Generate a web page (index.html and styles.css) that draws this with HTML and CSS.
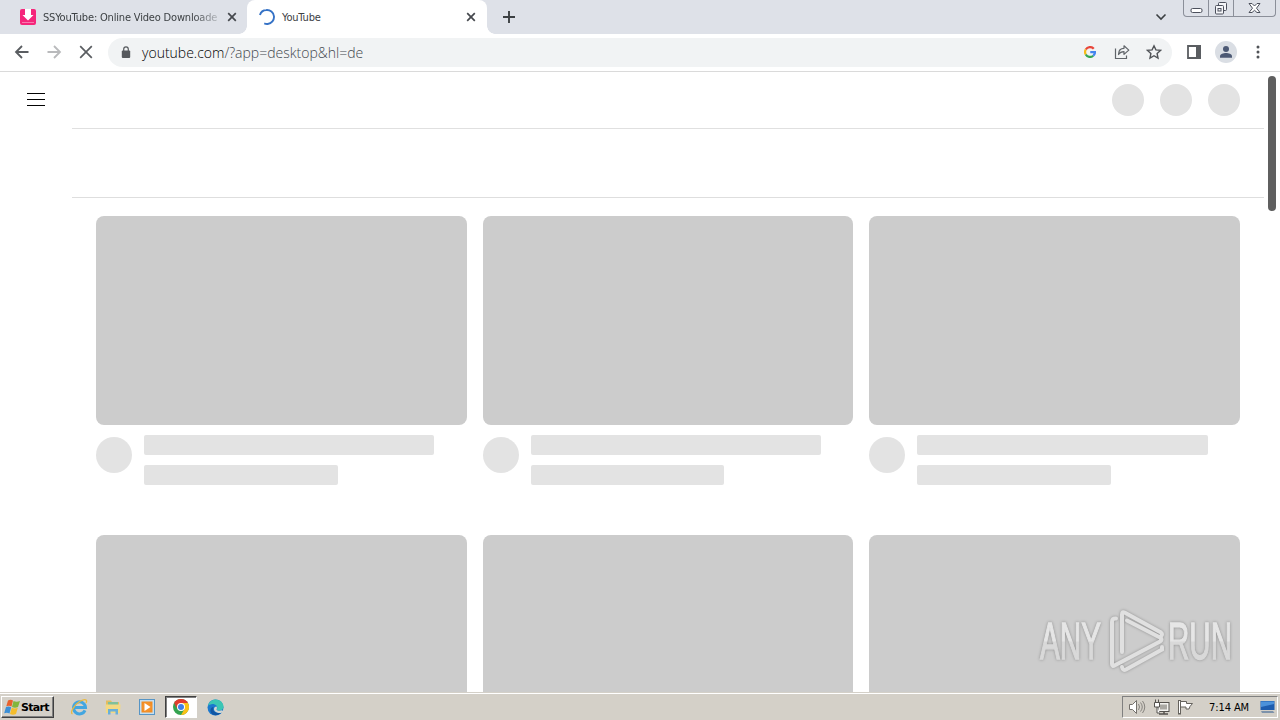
FILE: index.html
```html
<!DOCTYPE html>
<html lang="de">
<head>
    <meta charset="UTF-8">
    <meta name="viewport" content="width=device-width, initial-scale=1.0">
    <title>YouTube</title>
    <link rel="stylesheet" href="styles.css">
</head>
<body>

    <div class="tab-strip">
        <div class="tab">
            <svg class="favicon" width="16" height="16" viewBox="0 0 16 16">
                <rect width="16" height="16" rx="2" fill="#f5267b"/>
                <path d="M5 0h6v6h2.500L8 11.500 2.500 6H5z" fill="#fff"/>
                <path d="M2 13.500h12" fill="none" stroke="#f979ae" stroke-width="1"/>
            </svg>
            <span class="tab-title faded">SSYouTube: Online Video Downloade</span>
            <svg class="tab-close" width="10" height="10" viewBox="0 0 10 10"><path d="M1.2 1.2l7.6 7.6M8.8 1.2L1.2 8.8" stroke="#45484d" stroke-width="1.700"/></svg>
        </div>
        <div class="tab active">
            <svg class="favicon" width="16" height="16" viewBox="0 0 16 16">
                <path d="M1.2 5.2A7 7 0 0 1 8 1a7 7 0 0 1 0 14 7 7 0 0 1-3.4-.9" transform="rotate(-6 8 8)" fill="none" stroke="#3572c6" stroke-width="1.9"/>
            </svg>
            <span class="tab-title">YouTube</span>
            <svg class="tab-close" width="10" height="10" viewBox="0 0 10 10"><path d="M1.2 1.2l7.6 7.6M8.8 1.2L1.2 8.8" stroke="#45484d" stroke-width="1.700"/></svg>
        </div>
        <svg class="new-tab" width="12" height="12" viewBox="0 0 12 12"><path d="M6 0v12M0 6h12" stroke="#3c4043" stroke-width="1.9"/></svg>
        <svg class="tab-search" width="12" height="8" viewBox="0 0 12 8"><path d="M1.5 1.5L6 6l4.5-4.5" fill="none" stroke="#3c4043" stroke-width="1.6"/></svg>
        <div class="window-buttons">
            <span><svg width="13" height="15" viewBox="0 0 13 15"><rect x="1" y="8.5" width="11" height="4" rx="1.5" fill="#fff" stroke="#4c505c"/></svg></span>
            <span><svg width="14" height="15" viewBox="0 0 14 15"><g fill="#f4f5f8" stroke="#4c505c"><rect x="4.500" y="2.500" width="8" height="8" rx="1"/><rect x="1.500" y="5.500" width="8" height="8.500" rx="1"/><rect x="4" y="8.500" width="3" height="2.500"/></g></svg></span>
            <span><svg width="13" height="15" viewBox="0 0 13 15"><path d="M1 3.500h3l2.500 2.500L9 3.500h3L8.500 8.200 12 12.500H9L6.500 10.300 4 12.500H1l3.500-4.300z" fill="#fff" stroke="#4c505c"/></svg></span>
        </div>
    </div>

    <div class="toolbar">
        <div class="nav-icons">
            <svg width="16" height="16" viewBox="0 0 16 16"><path d="M14.500 8H2M8 2L2 8l6 6" fill="none" stroke="#5a5d61" stroke-width="1.800"/></svg>
            <svg width="16" height="16" viewBox="0 0 16 16"><path d="M1.500 8H14M8 2l6 6-6 6" fill="none" stroke="#b9babc" stroke-width="1.800"/></svg>
            <svg width="16" height="16" viewBox="0 0 16 16"><path d="M2.200 2.200l11.600 11.600M13.800 2.200L2.200 13.800" stroke="#5a5d61" stroke-width="1.700"/></svg>
        </div>
        <div class="address-bar">
            <svg class="lock" width="10" height="13" viewBox="0 0 10 13"><rect x=".8" y="4.500" width="8.400" height="7.500" rx="1" fill="#56595d"/><path d="M2.700 5V3.200a2.300 2.300 0 0 1 4.600 0V5" fill="none" stroke="#56595d" stroke-width="1.200"/></svg>
            <span class="url"><span class="host">youtube.com</span>/?app=desktop&amp;hl=de</span>
            <div class="address-icons">
                <svg width="12" height="12" viewBox="0 0 24 24" fill="none" stroke-width="4.500">
                    <path d="M19.500 5.500A10 10 0 0 0 3.500 7" stroke="#e8463a"/>
                    <path d="M3.500 7a10 10 0 0 0 0 10" stroke="#f7bb16"/>
                    <path d="M3.500 17A10 10 0 0 0 18.500 19.500" stroke="#35a553"/>
                    <path d="M18.500 19.500A10 10 0 0 0 22 12H12.500" stroke="#4384ee"/>
                </svg>
                <svg width="16" height="16" viewBox="0 0 16 16" fill="none" stroke="#606469" stroke-width="1.200"><path d="M1.500 4.500v10h11V11.500"/><path d="M4.500 10.500c0-4.300 2.200-6.200 5.500-6.200V1.800l4.800 4.300-4.800 4.300V7.700c-2.700 0-4.300.8-5.500 2.800z" stroke-linejoin="round"/></svg>
                <svg width="16" height="16" viewBox="0 0 16 16"><path d="M8 1.800l1.900 4.100 4.600.5-3.400 3.100.9 4.500L8 11.700 4 14l.9-4.500L1.500 6.400l4.600-.5z" fill="none" stroke="#505357" stroke-width="1.400"/></svg>
            </div>
        </div>
        <svg class="side-panel" width="14" height="14" viewBox="0 0 14 14"><path d="M1 1h12v12H1z" fill="none" stroke="#5a5d61" stroke-width="1.800"/><path d="M9 0h5v14H9z" fill="#5a5d61"/></svg>
        <svg class="profile" width="22" height="22" viewBox="0 0 22 22"><circle cx="11" cy="11" r="11" fill="#dadee4"/><circle cx="11" cy="8" r="3" fill="#4c5974"/><path d="M5 16.800v-1.600c0-2.200 3.500-3.200 6-3.200s6 1 6 3.200v1.600z" fill="#4c5974"/></svg>
        <svg class="menu-dots" width="4" height="14" viewBox="0 0 4 14" fill="#505357"><circle cx="2" cy="2" r="1.500"/><circle cx="2" cy="7" r="1.500"/><circle cx="2" cy="12" r="1.500"/></svg>
    </div>

    <div class="page">
        <div class="sidebar">
            <svg width="18" height="13" viewBox="0 0 18 13"><path d="M0 .5h18M0 6.500h18M0 12.500h18" stroke="#030303"/></svg>
        </div>
        <div class="content">
            <div class="masthead">
                <span class="circle"></span>
                <span class="circle"></span>
                <span class="circle"></span>
            </div>
            <div class="chips"></div>
            <div class="video-grid" id="videoGrid"></div>
        </div>
        <div class="scrollbar"><div class="thumb"></div></div>

        <svg class="watermark" width="220" height="80" viewBox="0 0 220 80">
            <defs>
                <linearGradient id="fade" gradientUnits="userSpaceOnUse" x1="0" y1="16" x2="0" y2="54">
                    <stop offset="0.520" stop-color="#e6e6e6"/>
                    <stop offset="0.560" stop-color="#d9d9d9"/>
                </linearGradient>
            </defs>
            <text x="5" y="54" textLength="61" lengthAdjust="spacingAndGlyphs">ANY</text>
            <text x="133" y="54" textLength="64" lengthAdjust="spacingAndGlyphs">RUN</text>
            <g class="mark">
                <path d="M87 47V9.500Q87 6 90 7.700L126 27.500Q128 29 126 31"/>
                <path d="M81 13.500Q77 13 77 17V59Q77 62 80 60.300L125 36.500Q128 34.500 125 32.500L92 15.500"/>
                <path d="M87 62Q88 66 91 64.500L127 44.500V42"/>
            </g>
        </svg>
    </div>

    <div class="taskbar">
        <div class="start">
            <svg width="17" height="16" viewBox="0 0 17 16">
                <path d="M4 1.500Q6.500 0 9 1.500L7.500 7.500Q5 6 2.300 7.300z" fill="#e8612c"/>
                <path d="M9.500 2q3 1.500 6.500 0L14 8q-3 1.500-6 0z" fill="#82b63c"/>
                <path d="M2 8Q4.700 6.700 7.200 8.300L5.500 14.500Q3 13 .2 14.300z" fill="#3c8fd6"/>
                <path d="M7.800 8.700q3 1.500 6 0L12 15q-3 1.500-6 0z" fill="#f4bd2c"/>
            </svg>
            <span>Start</span>
        </div>
        <div class="quick-launch">
            <span class="task"><svg width="18" height="18" viewBox="0 0 18 18">
                <path d="M15 12.300A6 6 0 1 1 15.500 9.500H5" fill="none" stroke="#43a6e0" stroke-width="3"/>
                <path d="M2.500 15.800C-.5 15 4 7 10 3.300 15 .5 18 1.500 16 5" fill="none" stroke="#e9b940" stroke-width="1.300"/>
            </svg></span>
            <span class="task"><svg width="18" height="18" viewBox="0 0 18 18">
                <path d="M2 2.500h5l1 1.500h7v10H2z" fill="#e3bd60"/>
                <path d="M4 4h10v3H4z" fill="#7fc09b"/>
                <path d="M1.500 6.500h15L16 15H2z" fill="#f3d983"/>
                <path d="M4 16.500V11h10v5.500h-2.500v-3h-5v3z" fill="#69afd9"/>
            </svg></span>
            <span class="task"><svg width="18" height="18" viewBox="0 0 18 18">
                <rect x="1.500" y="1.500" width="15" height="15" fill="#c4def0" stroke="#5795c5"/>
                <rect x="3.500" y="3.500" width="11" height="11" fill="#f28b21"/>
                <circle cx="9" cy="9" r="5" fill="#f4922b"/>
                <path d="M6.500 5l6 4-6 4z" fill="#fff"/>
            </svg></span>
            <span class="task pressed"><svg width="16" height="16" viewBox="0 0 16 16">
                <circle cx="8" cy="8" r="8" fill="#34a350"/>
                <path d="M8 8L1.070 4A8 8 0 0 1 14.930 4z" fill="#e33b2e"/>
                <path d="M8 4h6.930A8 8 0 0 1 8 16l3.500-6z" fill="#fbc116"/>
                <path d="M1.070 4L4.500 10 8 8z" fill="#e33b2e"/>
                <circle cx="8" cy="8" r="4" fill="#fff"/>
                <circle cx="8" cy="8" r="3" fill="#3f7fe8"/>
            </svg></span>
            <span class="task"><svg width="17" height="17" viewBox="0 0 17 17">
                <circle cx="8.500" cy="8.500" r="8" fill="#1b78ce"/>
                <path d="M1 6.500C2.500 2 6 .5 8.500.5c5 0 8 3.800 8 7 0 3-2.500 4-4.500 4-1.800 0-2.500-.7-2-1.500C11.300 7.500 8 4.500 4.500 5.200 3 5.400 2 6 1 6.500z" fill="#3bc6b4"/>
                <path d="M6.500 8c-1.500 4 2 7 7.500 5.800-3 3.700-9.500 3.200-10.500-1.300C3 10 4.500 8 6.500 8z" fill="#1256a3"/>
                <path d="M9.500 7.500c1 1.500.2 2.300 0 3 .4 1.200 3 1.700 5.500.8l1.500 1.200-2 1.300C11 14.500 7 13 7 10c0-1.300 1-2.300 2.500-2.500z" fill="#d3d6d2"/>
            </svg></span>
        </div>
        <div class="tray">
            <svg width="18" height="16" viewBox="0 0 18 16"><path d="M1.500 5.500h3l4-4v13l-4-4h-3z" fill="#fff" stroke="#74716c"/><path d="M10.500 5q2 3 0 6M12.500 3.500q3.500 4.500 0 9M14.500 2q4.500 6 0 12" fill="none" stroke="#86837e"/></svg>
            <svg width="17" height="16" viewBox="0 0 17 16"><rect x="5" y="3.500" width="11" height="9" fill="#f3f2ef" stroke="#55524e"/><rect x="7" y="5.500" width="7" height="5" fill="#aaa8a3"/><path d="M6 15h9M11 12.500V15" stroke="#55524e" stroke-width="1.500"/><path d="M1.500 3.500h5V8h-5zM2.500 .5v3M5.500 .5v3M4 8v6h3" fill="#fff" stroke="#55524e"/></svg>
            <svg width="17" height="16" viewBox="0 0 17 16"><rect x="1.500" y="1.500" width="2" height="13.500" fill="#fff" stroke="#65625d"/><path d="M3.500 2.500h6v2h6l-2.500 3-1 2.500H9V8H3.500z" fill="#fff" stroke="#65625d"/></svg>
            <span class="clock">7:14 AM</span>
            <svg width="15" height="14" viewBox="0 0 15 14"><path d="M.5 1h14v9H.5z" fill="#1e5cae"/><path d="M1 1.500h13V4L1 7z" fill="#4c91da"/><path d="M1 11h12l1.500 2H2z" fill="#7d92aa"/></svg>
        </div>
    </div>

    <script>
        const videoGrid = document.getElementById("videoGrid");
        const videos = 6; // Placeholder cards, three per row

        for (let i = 0; i < videos; i++) {
            let card = document.createElement("div");
            card.classList.add("video");
            card.innerHTML = `
                <div class="thumbnail"></div>
                <div class="details">
                    <div class="avatar"></div>
                    <div class="lines">
                        <div class="line title"></div>
                        <div class="line meta"></div>
                    </div>
                </div>`;
            videoGrid.appendChild(card);
        }
    </script>

</body>
</html>
```
FILE: styles.css
```css
* {
    box-sizing: border-box;
}

body {
    margin: 0;
    height: 720px;
    display: flex;
    flex-direction: column;
    overflow: hidden;
    background: white;
    font-family: "DejaVu Sans Condensed", "DejaVu Sans", sans-serif;
    font-size: 11px;
}

svg {
    display: block;
    flex: none;
}

/* Browser tabs */
.tab-strip {
    flex: none;
    height: 34px;
    display: flex;
    align-items: flex-start;
    background: #dee1e8;
}

.tab {
    position: relative;
    width: 247px;
    height: 34px;
    padding: 0 10px 0 20px;
    display: flex;
    align-items: center;
    color: #3c4043;
}

.tab.active {
    width: 240px;
    padding: 0 11px 0 12px;
    background: white;
    border-radius: 8px 8px 0 0;
}

.tab.active::before,
.tab.active::after {
    content: "";
    position: absolute;
    bottom: 0;
    width: 8px;
    height: 8px;
}

.tab.active::before {
    left: -8px;
    background: radial-gradient(circle at 0 0, transparent 7.5px, white 8px);
}

.tab.active::after {
    right: -8px;
    background: radial-gradient(circle at 100% 0, transparent 7.5px, white 8px);
}

.tab-title {
    margin-left: 7px;
    width: 177px;
    white-space: nowrap;
    letter-spacing: -0.18px;
}

.tab-title.faded {
    -webkit-mask-image: linear-gradient(to right, black 150px, transparent 182px);
    mask-image: linear-gradient(to right, black 150px, transparent 182px);
}

.tab-close {
    margin-left: auto;
}

.new-tab {
    margin: 11px 0 0 16px;
}

.tab-search {
    margin: 13px 16px 0 auto;
}

.window-buttons {
    display: flex;
    width: 93px;
    height: 17px;
    margin-right: 4px;
    border: 1px solid #8b8f99;
    border-top: none;
    border-radius: 0 0 4px 4px;
}

.window-buttons span {
    width: 25px;
    display: flex;
    justify-content: center;
    border-right: 1px solid #8b8f99;
}

.window-buttons span:last-child {
    flex: 1;
    border-right: none;
}

/* Address row */
.toolbar {
    flex: none;
    height: 38px;
    display: flex;
    align-items: center;
    padding: 0 20px 1px 14px;
    border-bottom: 1px solid #dadada;
}

.nav-icons {
    display: flex;
    gap: 16px;
}

.address-bar {
    width: 1064px;
    height: 29px;
    margin-left: 14px;
    padding: 0 10px 0 13px;
    display: flex;
    align-items: center;
    border-radius: 15px;
    background: #f1f3f4;
}

.url {
    margin-left: 11px;
    font-family: "Open Sans", "Noto Sans", sans-serif;
    font-size: 14px;
    font-weight: 300;
    color: #43484e;
}

.host {
    color: black;
}

.address-icons {
    margin-left: auto;
    display: flex;
    align-items: center;
    gap: 16px;
}

.address-icons svg:first-child {
    margin-right: 2px;
}

.side-panel {
    margin-left: 15px;
}

.profile {
    margin-left: 14px;
}

.menu-dots {
    margin-left: auto;
}

/* Page placeholders */
.page {
    position: relative;
    flex: 1;
    min-height: 0;
    display: flex;
    overflow: hidden;
}

.sidebar {
    width: 72px;
    padding: 21px 27px;
}

.content {
    width: 1192px;
}

.masthead {
    height: 57px;
    padding: 0 24px 1px 0;
    display: flex;
    align-items: center;
    justify-content: flex-end;
    gap: 16px;
    border-bottom: 1px solid #e0e0e0;
}

.circle {
    width: 32px;
    height: 32px;
    border-radius: 50%;
    background: #e3e3e3;
}

.chips {
    height: 69px;
    border-bottom: 1px solid #dedede;
}

.video-grid {
    display: grid;
    grid-template-columns: repeat(3, 1fr);
    gap: 50px 16px;
    padding: 18px 24px 0;
}

.thumbnail {
    height: 209px;
    border-radius: 8px;
    background: #ccc;
}

.details {
    display: flex;
    height: 60px;
    padding-top: 10px;
}

.avatar {
    width: 36px;
    height: 36px;
    margin: 2px 12px 0 0;
    border-radius: 50%;
    background: #e3e3e3;
}

.lines {
    flex: 1;
}

.line {
    height: 20px;
    margin-bottom: 10px;
    border-radius: 2px;
    background: #e3e3e3;
}

.title {
    width: 90%;
}

.meta {
    width: 60%;
}

.scrollbar {
    width: 16px;
    padding: 4px;
}

.thumb {
    height: 135px;
    border-radius: 4px;
    background: #5f5f5f;
}

.watermark {
    position: absolute;
    left: 1035px;
    top: 533px;
    filter: drop-shadow(0 0 1.5px rgba(0, 0, 0, 0.3));
}

.watermark text {
    font-family: "Liberation Sans Narrow", "Liberation Sans", sans-serif;
    font-size: 51px;
    fill: url(#fade);
    stroke: url(#fade);
    stroke-width: 1.3;
}

.mark {
    fill: none;
    stroke: #e0e0e0;
    stroke-width: 4;
    stroke-linecap: round;
}

/* Windows taskbar */
.taskbar {
    flex: none;
    height: 28px;
    display: flex;
    align-items: center;
    padding: 1px 2px 0 1px;
    background: #d4d0c8;
    border-top: 1px solid #d4d0c8;
    box-shadow: inset 0 1px white;
}

.start {
    width: 53px;
    height: 22px;
    padding-left: 2px;
    display: flex;
    align-items: center;
    border: 1px solid;
    border-color: white #404040 #404040 white;
    box-shadow: inset -1px -1px #808080;
    font-family: "DejaVu Sans", sans-serif;
    font-weight: bold;
    letter-spacing: -0.7px;
    color: black;
}

.quick-launch {
    display: flex;
    gap: 2px;
    margin-left: 9px;
}

.task {
    width: 32px;
    height: 22px;
    display: flex;
    align-items: center;
    justify-content: center;
}

.task.pressed {
    background: white;
    border: 1px solid;
    border-color: #404040 white white #404040;
    box-shadow: inset 1px 1px #808080;
}

.tray {
    margin-left: auto;
    width: 156px;
    height: 22px;
    padding: 0 2px 0 5px;
    display: flex;
    align-items: center;
    gap: 7px;
    border: 1px solid;
    border-color: #808080 white white #808080;
}

.clock {
    margin-left: auto;
    margin-right: 4px;
    white-space: nowrap;
    letter-spacing: -0.1px;
    color: black;
}
```
